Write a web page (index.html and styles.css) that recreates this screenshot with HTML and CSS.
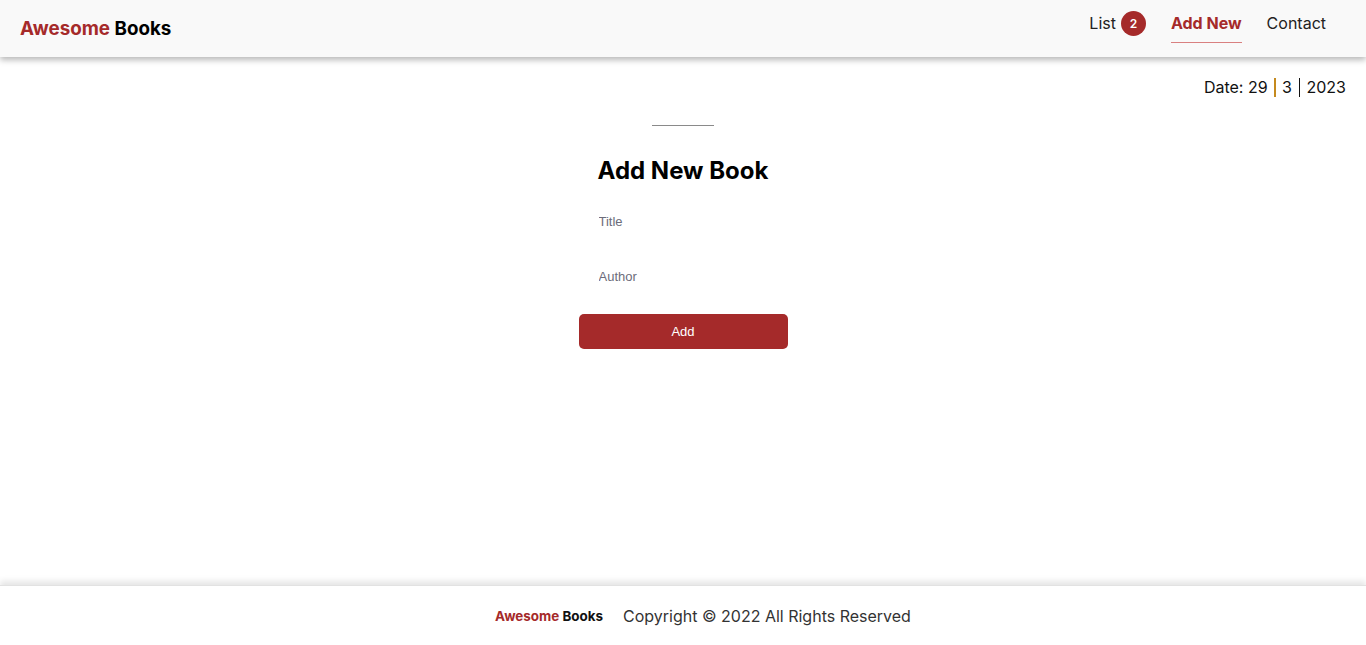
FILE: index.html
```html
<!DOCTYPE html>
<html lang="en">
<head>
<meta charset="utf-8">
<title>Awesome Books</title>
<link rel="stylesheet" href="styles.css">
</head>
<body>
<header class="topbar">
  <h1 class="logo"><span class="red">Awesome</span> Books</h1>
  <nav class="nav">
    <a class="nav-item">List <span class="badge">2</span></a>
    <a class="nav-item active">Add New</a>
    <a class="nav-item">Contact</a>
  </nav>
</header>
<main class="main">
  <div class="date">Date: 29 <span class="sep orange"></span> 3 <span class="sep"></span> 2023</div>
  <section class="add">
    <div class="rule"></div>
    <h2 class="add-title">Add New Book</h2>
    <form class="form">
      <input class="field" type="text" placeholder="Title">
      <input class="field" type="text" placeholder="Author">
      <button class="btn" type="button">Add</button>
    </form>
  </section>
</main>
<footer class="footer">
  <span class="foot-logo"><span class="red">Awesome</span> Books</span>
  <span class="copy">Copyright © 2022 All Rights Reserved</span>
</footer>
</body>
</html>
```
FILE: styles.css
```css
* { box-sizing: border-box; }
html, body { margin: 0; padding: 0; }
body {
  font-family: Inter, "Noto Sans", sans-serif;
  color: #222;
  min-height: 100vh;
  display: flex;
  flex-direction: column;
  background: #fff;
}
.red { color: #a52a2a; }
.topbar {
  height: 57px;
  background: #f9f9f9;
  box-shadow: 0 3px 6px rgba(0,0,0,0.28);
  display: flex;
  justify-content: space-between;
  align-items: center;
  padding: 0 40px 0 20px;
  position: relative;
  z-index: 2;
}
.logo {
  margin: 0;
  font-size: 18.8px;
  font-weight: 700;
  color: #000;
}
.nav {
  display: flex;
  gap: 25px;
  align-self: flex-start;
  padding-top: 11px;
}
.nav-item {
  font-size: 16px;
  color: #222;
  display: flex;
  align-items: center;
  height: 24px;
  text-decoration: none;
}
.nav-item.active {
  color: #a52a2a;
  font-weight: 700;
  border-bottom: 1px solid #d98080;
  height: 32px;
  padding-bottom: 8px;
}
.badge {
  display: inline-flex;
  align-items: center;
  justify-content: center;
  width: 25px;
  height: 25px;
  border-radius: 50%;
  background: #a52a2a;
  color: #fff;
  font-size: 12px;
  font-weight: 600;
  margin-left: 5px;
}
.main {
  flex: 1;
  display: flex;
  flex-direction: column;
}
.date {
  align-self: flex-end;
  padding: 21px 20px 0 0;
  font-size: 16px;
  line-height: 19px;
  color: #111;
}
.sep {
  display: inline-block;
  width: 1.5px;
  height: 19px;
  margin: 0 2px;
  vertical-align: -4px;
  background: #111;
}
.sep.orange { background: #c58a1e; }
.add {
  display: flex;
  flex-direction: column;
  align-items: center;
}
.rule {
  width: 62px;
  height: 1px;
  background: #8a8a8a;
  margin-top: 28px;
}
.add-title {
  margin: 30px 0 0;
  font-size: 24px;
  font-weight: 700;
  color: #000;
}
.form {
  display: flex;
  flex-direction: column;
  width: 209px;
  margin-top: 9px;
}
.field {
  border: none;
  outline: none;
  background: transparent;
  height: 55px;
  padding: 0 0 0 20px;
  font-family: "Liberation Sans", Arial, sans-serif;
  font-size: 13px;
  color: #333;
}
.field::placeholder { color: #6c6c7a; }
.btn {
  margin-top: 10px;
  height: 35px;
  border: none;
  border-radius: 5px;
  background: #a52a2a;
  color: #fff;
  font-family: "Liberation Sans", Arial, sans-serif;
  font-size: 13px;
}
.footer {
  height: 60px;
  display: flex;
  justify-content: center;
  align-items: center;
  gap: 20px;
  padding-left: 40px;
  box-shadow: 0 -4px 6px rgba(0,0,0,0.1);
  border-top: 1px solid #e2e2e2;
}
.foot-logo {
  font-size: 13.4px;
  font-weight: 700;
  color: #111;
}
.copy {
  font-size: 16px;
  color: #333;
}
```
